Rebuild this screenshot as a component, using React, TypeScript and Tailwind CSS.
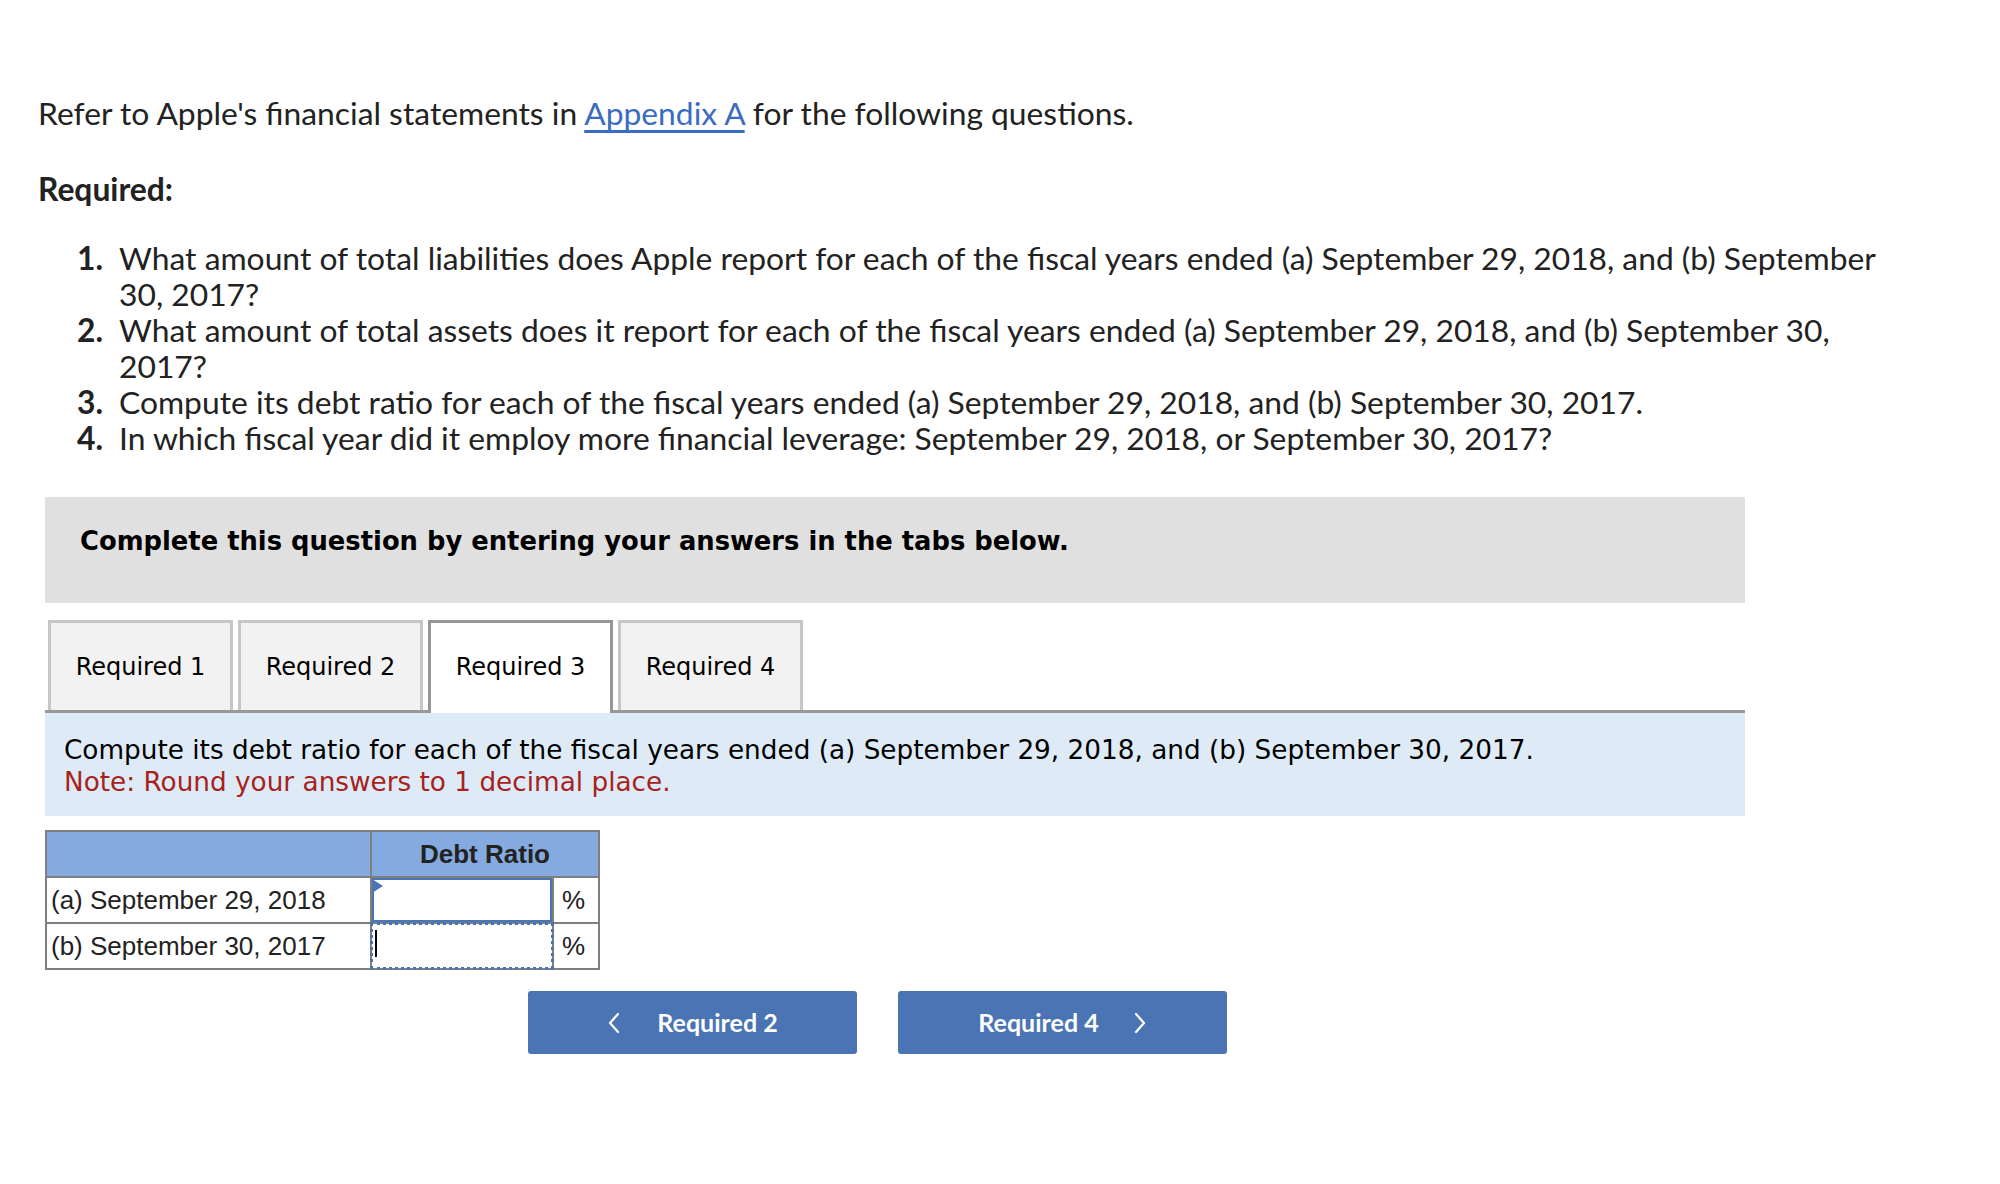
import React from 'react';

const questions = [
  'What amount of total liabilities does Apple report for each of the fiscal years ended (a) September 29, 2018, and (b) September 30, 2017?',
  'What amount of total assets does it report for each of the fiscal years ended (a) September 29, 2018, and (b) September 30, 2017?',
  'Compute its debt ratio for each of the fiscal years ended (a) September 29, 2018, and (b) September 30, 2017.',
  'In which fiscal year did it employ more financial leverage: September 29, 2018, or September 30, 2017?'
];

const tabs = ['Required 1', 'Required 2', 'Required 3', 'Required 4'];

function Chevron({dir}: {dir: 'left' | 'right'}) {
  return (
    <svg width="14" height="22" viewBox="0 0 14 22" className="shrink-0">
      <polyline
        points={dir === 'left' ? '11,2 3,11 11,20' : '3,2 11,11 3,20'}
        fill="none"
        stroke="white"
        strokeWidth="2.2"
        strokeLinecap="round"
        strokeLinejoin="round"
      />
    </svg>
  );
}

export default function App() {
  return (
    <div className="min-h-[1184px] w-full bg-white pl-[38px] pt-[95px] text-[#222]">
      <p className="font-['Lato',sans-serif] text-[31.8px] leading-[36px]">
        Refer to Apple's financial statements in{' '}
        <span className="text-[#3a6cc0] underline underline-offset-[5px]">Appendix A</span> for the
        following questions.
      </p>

      <div className="mt-[40px] font-['Lato',sans-serif] text-[31.8px] font-bold leading-[36px]">
        Required:
      </div>

      <ol className="mt-[33px] w-[1867px] font-['Lato',sans-serif] text-[31.8px] leading-[36px]">
        {questions.map((q, i) => (
          <li key={i} className="flex gap-[16px]">
            <span className="w-[65px] shrink-0 text-right font-bold">{i + 1}.</span>
            <span>{q}</span>
          </li>
        ))}
      </ol>

      <div className="ml-[7px] mt-[41px] w-[1700px] font-['DejaVu_Sans',Verdana,sans-serif]">
        <div className="h-[106px] bg-[#e0e0e0] pl-[35px] pt-[27px] text-[25.8px] font-bold leading-[34px] text-black">
          Complete this question by entering your answers in the tabs below.
        </div>

        <div className="mt-[17px] flex items-start gap-[5px] border-b-[3px] border-[#999] pl-[3px]">
          {tabs.map((t) => {
            const active = t === 'Required 3';
            return active ? (
              <div
                key={t}
                className="relative -mb-[3px] flex h-[93px] w-[185px] items-center justify-center border-[3px] border-b-0 border-[#969696] bg-white pb-[3px] text-[24px] text-black"
              >
                {t}
              </div>
            ) : (
              <div
                key={t}
                className="flex h-[90px] w-[185px] items-center justify-center border-[3px] border-b-0 border-[#c6c6c6] bg-[#f2f2f2] text-[24px] text-black"
              >
                {t}
              </div>
            );
          })}
        </div>

        <div className="bg-[#deebf7] pb-[18px] pl-[19px] pt-[21px] text-[26.3px] leading-[32px] text-black">
          <div>
            Compute its debt ratio for each of the fiscal years ended (a) September 29, 2018, and (b)
            September 30, 2017.
          </div>
          <div className="text-[#a7221c]">Note: Round your answers to 1 decimal place.</div>
        </div>

        <table className="mt-[14px] border-collapse font-['Liberation_Sans',Arial,sans-serif] text-[26px] text-[#222]">
          <thead>
            <tr className="h-[46px] bg-[#84aadf]">
              <th className="w-[325px] border-2 border-[#7f7f7f]" />
              <th colSpan={2} className="border-2 border-[#7f7f7f] text-center font-bold">
                Debt Ratio
              </th>
            </tr>
          </thead>
          <tbody>
            <tr className="h-[46px]">
              <td className="border-2 border-[#7f7f7f] pl-[4px] text-left">(a) September 29, 2018</td>
              <td className="relative w-[182px] border-2 border-[#7f7f7f] p-0">
                <div className="absolute inset-0 border-2 border-[#4a74b4]" />
                <svg width="11" height="14" viewBox="0 0 11 14" className="absolute left-0 top-[1px]">
                  <polygon points="0,0 11,7 0,14" fill="#4a74b4" />
                </svg>
              </td>
              <td className="w-[46px] border-2 border-[#7f7f7f] pl-[8px]">%</td>
            </tr>
            <tr className="h-[46px]">
              <td className="border-2 border-[#7f7f7f] pl-[4px] text-left">(b) September 30, 2017</td>
              <td className="relative border-2 border-[#7f7f7f] p-0">
                <div className="absolute -inset-[2px] border-[3px] border-dotted border-[#4a74b4]" />
                <div className="absolute left-[3px] top-[6px] h-[27px] w-[2px] bg-black" />
              </td>
              <td className="border-2 border-[#7f7f7f] pl-[8px]">%</td>
            </tr>
          </tbody>
        </table>

        <div className="mt-[21px] flex gap-[41px] pl-[483px] font-['Lato',sans-serif] text-[25px] font-bold text-white">
          <button
            type="button"
            className="flex h-[63px] w-[329px] items-center justify-center gap-[36px] rounded-[3px] bg-[#4a74b3]"
          >
            <Chevron dir="left" />
            <span>Required 2</span>
          </button>
          <button
            type="button"
            className="flex h-[63px] w-[329px] items-center justify-center gap-[34px] rounded-[3px] bg-[#4a74b3]"
          >
            <span>Required 4</span>
            <Chevron dir="right" />
          </button>
        </div>
      </div>
    </div>
  );
}
